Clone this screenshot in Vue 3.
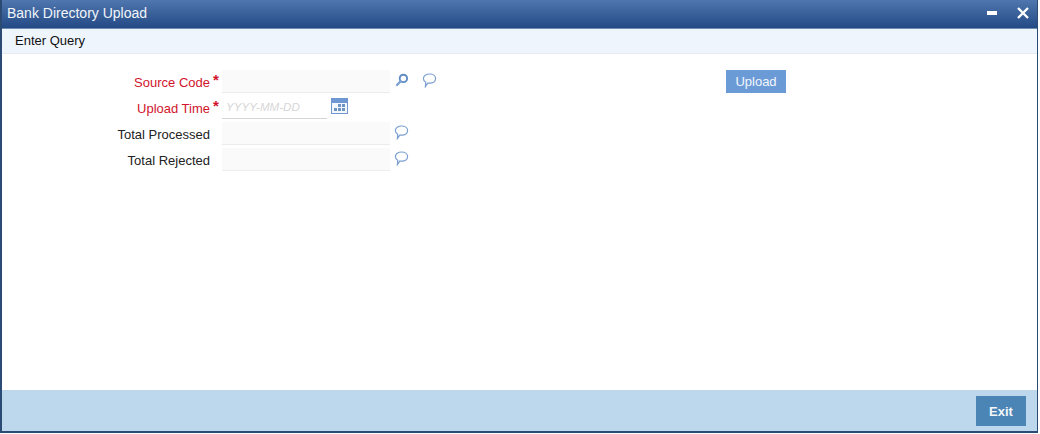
<template>
  <div class="window">
    <header class="title-bar">
      <span class="title">Bank Directory Upload</span>
      <div class="window-btns">
        <span class="minimize"></span>
        <svg class="close" width="12" height="12" viewBox="0 0 12 12">
          <path d="M1 1L11 11M11 1L1 11" stroke="#fff" stroke-width="2.4" fill="none" />
        </svg>
      </div>
    </header>

    <div class="toolbar">Enter Query</div>

    <main class="content">
      <div class="form">
        <div v-for="row in rows" :key="row.label" class="row">
          <label class="label" :class="{ required: row.required }">{{ row.label }}</label>
          <span class="star">{{ row.required ? '*' : '' }}</span>
          <div v-if="row.date" class="input date">YYYY-MM-DD</div>
          <div v-else class="input"></div>

          <svg v-if="row.date" class="calendar" width="17" height="16" viewBox="0 0 17 16">
            <rect x="0" y="0" width="17" height="16" fill="#6f97d2" />
            <rect x="1" y="5" width="15" height="10" fill="#f4f7fc" />
            <g fill="#6f93c4">
              <rect x="7" y="6" width="3" height="3" />
              <rect x="11" y="6" width="3" height="3" />
              <rect x="3" y="10" width="3" height="3" />
              <rect x="7" y="10" width="3" height="3" />
              <rect x="11" y="10" width="3" height="3" />
            </g>
          </svg>

          <svg v-if="row.search" class="search" width="14" height="14" viewBox="0 0 14 14">
            <circle cx="8.4" cy="5.4" r="3.7" fill="none" stroke="#5f8cc4" stroke-width="1.9" />
            <path d="M5.5 8.4L2 12" stroke="#7fa3d6" stroke-width="2.4" stroke-linecap="round" />
          </svg>

          <svg v-if="!row.date" class="comment" :class="{ shifted: row.search }" width="15" height="15" viewBox="0 0 15 15">
            <path
              d="M7.6 1C10.9 1 13.6 2.9 13.6 5.6C13.6 8.4 10.9 10.2 7.9 10.2C7.2 10.2 6.5 10.1 5.9 10L3.4 13.6L3.7 9.2C2.2 8.4 1.4 7.2 1.4 5.6C1.4 2.9 4.2 1 7.6 1Z"
              fill="#fff"
              stroke="#7b9fd0"
              stroke-width="1.2"
            />
          </svg>
        </div>
      </div>
      <button class="upload" type="button">Upload</button>
    </main>

    <footer class="footer">
      <button class="exit" type="button">Exit</button>
    </footer>
  </div>
</template>

<script setup>
const rows = [
  { label: 'Source Code', required: true, search: true },
  { label: 'Upload Time', required: true, date: true },
  { label: 'Total Processed' },
  { label: 'Total Rejected' },
]
</script>

<style>
html,
body {
  margin: 0;
  background: #fff;
}
</style>

<style scoped>
.window {
  box-sizing: border-box;
  width: 1038px;
  height: 433px;
  display: flex;
  flex-direction: column;
  border: solid #2b4a74;
  border-width: 0 1px 2px 2px;
  background: #fff;
  font-family: "Liberation Sans", Arial, sans-serif;
  font-size: 13px;
  color: #1a1a1a;
}

.title-bar {
  height: 29px;
  flex: none;
  display: flex;
  align-items: center;
  justify-content: space-between;
  padding: 0 8px 2px 5px;
  box-sizing: border-box;
  background: linear-gradient(#4f76ae, #234a84);
  border-bottom: 1px solid #6d8db0;
  color: #f2f5fa;
}

.title {
  font-size: 14px;
}

.window-btns {
  display: flex;
  align-items: center;
  gap: 20px;
}

.minimize {
  width: 10px;
  height: 4px;
  background: #fff;
}

.toolbar {
  height: 25px;
  flex: none;
  box-sizing: border-box;
  padding: 4px 0 0 13px;
  background: #eef5fd;
  border-bottom: 1px solid #e6e9ed;
  line-height: 16px;
  color: #111;
}

.content {
  flex: 1;
  display: flex;
  align-items: flex-start;
  padding-top: 16px;
}

.form {
  width: 724px;
  display: flex;
  flex-direction: column;
  gap: 3px;
}

.row {
  height: 23px;
  display: flex;
  align-items: center;
}

.label {
  width: 208px;
  padding-top: 2px;
  text-align: right;
  line-height: 23px;
  color: #222;
}

.label.required {
  color: #d2142c;
}

.star {
  width: 12px;
  padding-left: 3px;
  box-sizing: border-box;
  color: #d2142c;
  font-size: 15px;
  font-weight: bold;
  line-height: 20px;
  align-self: flex-start;
}

.input {
  box-sizing: border-box;
  width: 168px;
  height: 23px;
  background: #fafafa;
  border-bottom: 1px solid #ececec;
}

.input.date {
  width: 105px;
  padding-left: 4px;
  background: #fff;
  border-bottom: 1px solid #d4d4d4;
  color: #d6d6d6;
  font-size: 11.6px;
  font-style: italic;
  line-height: 22px;
}

.calendar {
  margin: -3px 0 0 4px;
}

.search {
  margin: -3px 0 0 5px;
}

.comment {
  margin: -2px 0 0 4px;
}

.comment.shifted {
  margin-left: 13px;
  margin-top: -3px;
}

.upload {
  width: 60px;
  height: 23px;
  padding: 0;
  border: 0;
  background: #6b9bd7;
  color: #f3f6fb;
  font: inherit;
}

.footer {
  height: 41px;
  flex: none;
  display: flex;
  justify-content: flex-end;
  align-items: flex-start;
  padding: 6px 11px 0 0;
  box-sizing: border-box;
  background: #bdd7ec;
}

.exit {
  width: 50px;
  height: 30px;
  padding: 0;
  border: 0;
  background: #4a85b5;
  color: #f4f7fa;
  font: bold 13px "Liberation Sans", Arial, sans-serif;
}
</style>
